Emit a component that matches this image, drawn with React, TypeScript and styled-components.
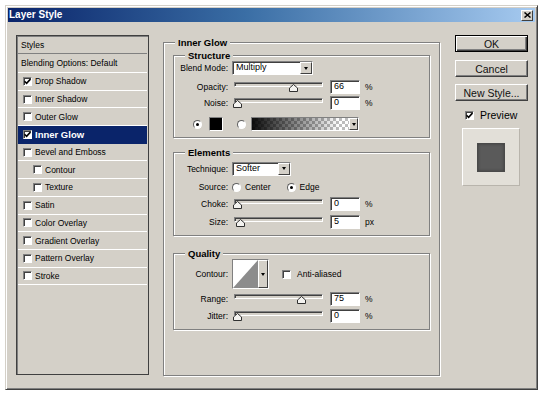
import React from "react";
import styled, { createGlobalStyle } from "styled-components";

const GlobalStyle = createGlobalStyle`
  html, body {
    margin: 0;
    padding: 0;
    background: #fff;
  }
  body {
    font-family: "Liberation Sans", Arial, sans-serif;
    font-size: 8.5px;
    color: #000;
  }
  * {
    box-sizing: border-box;
  }
`;

const face = "#d4d0c8";

const Page = styled.div`
  padding: 5px 0 0 5px;
`;

const Window = styled.div`
  width: 533px;
  height: 385px;
  background: ${face};
  border: 1px solid;
  border-color: ${face} #404040 #404040 ${face};
  box-shadow: inset 1px 1px 0 #fff, inset -1px -1px 0 #808080;
  padding: 2px;
  display: flex;
  flex-direction: column;
`;

const TitleBar = styled.div`
  height: 14px;
  background: linear-gradient(to right, #0a246a 0%, #3a6ea5 45%, #a6caf0 100%);
  display: flex;
  align-items: center;
  justify-content: space-between;
  padding: 0 2px 0 1px;
`;

const Title = styled.div`
  color: #fff;
  font-weight: bold;
  font-size: 10px;
  line-height: 14px;
`;

const CloseBox = styled.div`
  width: 12px;
  height: 11px;
  background: ${face};
  border: 1px solid;
  border-color: #fff #404040 #404040 #fff;
  display: flex;
  align-items: center;
  justify-content: center;
`;

const Body = styled.div`
  display: flex;
  padding: 13px 0 0 8px;
`;

/* ---------- styles list ---------- */

const StylesList = styled.div`
  width: 133px;
  height: 340px;
  border: 1px solid #404040;
  box-shadow: inset 1px 1px 0 #808080;
  padding: 0 1px;
`;

const ListHead = styled.div<{ $h: number; $line: string }>`
  height: ${(p) => p.$h}px;
  border-bottom: 1px solid ${(p) => p.$line};
  display: flex;
  align-items: center;
  padding-left: 3px;
`;

const ListRow = styled.div<{ $indent: boolean; $selected: boolean }>`
  height: 17.7px;
  border-bottom: 1px solid ${(p) => (p.$selected ? "#0a246a" : "#fff")};
  display: flex;
  align-items: center;
  padding-left: ${(p) => (p.$indent ? 15 : 5)}px;
  background: ${(p) => (p.$selected ? "#0a246a" : "transparent")};
  color: ${(p) => (p.$selected ? "#fff" : "#000")};
  font-weight: ${(p) => (p.$selected ? "bold" : "normal")};
  font-size: ${(p) => (p.$selected ? 9.5 : 8.5)}px;
`;

const RowText = styled.span`
  margin-left: 3px;
  white-space: nowrap;
`;

/* ---------- form primitives ---------- */

const CheckBox = styled.span`
  width: 9px;
  height: 9px;
  flex: none;
  background: #fff;
  border: 1px solid;
  border-color: #808080 #fff #fff #808080;
  box-shadow: inset 1px 1px 0 #404040;
  display: inline-flex;
  align-items: center;
  justify-content: center;
`;

const Radio = styled.span`
  width: 9px;
  height: 9px;
  flex: none;
  border-radius: 50%;
  background: #fff;
  border: 1px solid;
  border-color: #606060 #fff #fff #606060;
  display: inline-flex;
  align-items: center;
  justify-content: center;
`;

const Dot = styled.span`
  width: 3px;
  height: 3px;
  border-radius: 50%;
  background: #000;
`;

const Sunken = styled.div<{ $w: number; $h: number; $ml: number }>`
  width: ${(p) => p.$w}px;
  height: ${(p) => p.$h}px;
  margin-left: ${(p) => p.$ml}px;
  flex: none;
  background: #fff;
  border: 1px solid;
  border-color: #808080 #fff #fff #808080;
  box-shadow: inset 1px 1px 0 #404040;
  display: flex;
  align-items: stretch;
`;

const FieldText = styled.span`
  flex: 1;
  padding-left: 3px;
  font-size: 9px;
  line-height: 11px;
  white-space: nowrap;
  overflow: hidden;
`;

const DropButton = styled.span<{ $w: number }>`
  width: ${(p) => p.$w}px;
  flex: none;
  background: ${face};
  border: 1px solid;
  border-color: #fff #404040 #404040 #fff;
  display: flex;
  align-items: center;
  justify-content: center;
`;

const Arrow = styled.span`
  width: 0;
  height: 0;
  border-left: 2.5px solid transparent;
  border-right: 2.5px solid transparent;
  border-top: 3px solid #000;
`;

/* ---------- group boxes ---------- */

const Group = styled.div<{ $mt: number; $mx: number; $pb: number; $h?: number }>`
  margin: ${(p) => p.$mt}px ${(p) => p.$mx}px 0;
  padding-bottom: ${(p) => p.$pb}px;
  ${(p) => (p.$h ? `height: ${p.$h}px;` : "")}
  border: 1px solid #808080;
  box-shadow: inset 1px 1px 0 #fff, 1px 1px 0 #fff;
`;

const Legend = styled.div`
  width: fit-content;
  margin: -6px 0 0 11px;
  padding: 0 3px;
  background: ${face};
  font-weight: bold;
  font-size: 9.5px;
  line-height: 11px;
`;

const MiddleColumn = styled.div`
  width: 277px;
  margin: 7px 0 0 14px;
`;

const Row = styled.div<{ $h: number; $mt: number; $pl?: number }>`
  height: ${(p) => p.$h}px;
  margin-top: ${(p) => p.$mt}px;
  padding-left: ${(p) => p.$pl ?? 0}px;
  display: flex;
  align-items: center;
`;

const Label = styled.span`
  width: 54px;
  flex: none;
  text-align: right;
  white-space: nowrap;
`;

const SliderBox = styled.div`
  position: relative;
  width: 89px;
  height: 14px;
  margin-left: 6px;
  flex: none;
  align-self: flex-start;
`;

const Track = styled.div`
  margin-top: 2px;
  height: 5px;
  border: 1px solid;
  border-color: #808080 #fff #fff #808080;
  box-shadow: inset 1px 1px 0 #404040;
  background: ${face};
`;

const Thumb = styled.svg`
  position: absolute;
  top: 4px;
`;

const Unit = styled.span`
  margin-left: 5px;
  font-size: 8.5px;
`;

const Swatch = styled.div`
  width: 14px;
  height: 14px;
  margin-left: 7px;
  background: #000;
  border: 1px solid;
  border-color: #808080 #fff #fff #808080;
`;

const GradientFill = styled.span`
  flex: 1;
  background: linear-gradient(to right, rgba(0, 0, 0, 0.95), rgba(0, 0, 0, 0) 90%),
    repeating-conic-gradient(#bdbdbd 0 25%, #fff 0 50%) 0 0 / 6px 6px;
`;

const RadioText = styled.span<{ $ml: number }>`
  margin-left: ${(p) => p.$ml}px;
  white-space: nowrap;
`;

const RadioWrap = styled.span<{ $ml: number }>`
  margin-left: ${(p) => p.$ml}px;
  display: inline-flex;
`;

const ContourPic = styled.svg`
  display: block;
  flex: none;
`;

/* ---------- right column ---------- */

const RightColumn = styled.div`
  width: 73px;
  margin-left: 15px;
  display: flex;
  flex-direction: column;
`;

const Button = styled.div<{ $default?: boolean; $mt: number }>`
  height: 17px;
  margin-top: ${(p) => p.$mt}px;
  background: ${face};
  border: 1px solid;
  border-color: ${(p) => (p.$default ? "#000" : "#fff #404040 #404040 #fff")};
  box-shadow: ${(p) =>
    p.$default
      ? "inset 1px 1px 0 #fff, inset -1px -1px 0 #404040, inset -2px -2px 0 #808080"
      : "inset -1px -1px 0 #808080"};
  display: flex;
  align-items: center;
  justify-content: center;
  font-size: 10.5px;
  color: #111;
`;

const PreviewRow = styled.div`
  margin-top: 9px;
  height: 10px;
  padding-left: 10px;
  display: flex;
  align-items: center;
  font-size: 10.5px;
`;

const PreviewBox = styled.div`
  width: 58px;
  height: 58px;
  margin: 8px 0 0 7px;
  background: #e2dfd8;
  border: 1px solid;
  border-color: #fff #b8b4ac #b8b4ac #fff;
  display: flex;
  align-items: center;
  justify-content: center;
`;

const PreviewSquare = styled.div`
  width: 28px;
  height: 29px;
  background: #5a5a5a;
  border: 1px solid #4a4a4a;
  box-shadow: inset 0 0 3px #3c3c3c;
`;

/* ---------- small pieces ---------- */

const Check = ({ color = "#000" }: { color?: string }) => (
  <svg width="7" height="7" viewBox="0 0 7 7">
    <path d="M0.5 3.2 L2.6 5.3 L6.5 1" fill="none" stroke={color} strokeWidth="1.6" />
  </svg>
);

const Box = ({ checked }: { checked?: boolean }) => (
  <CheckBox>{checked && <Check />}</CheckBox>
);

const RadioButton = ({ on }: { on?: boolean }) => <Radio>{on && <Dot />}</Radio>;

const Dropdown = ({ text, width }: { text: string; width: number }) => (
  <Sunken $w={width} $h={14} $ml={4}>
    <FieldText>{text}</FieldText>
    <DropButton $w={12}>
      <Arrow />
    </DropButton>
  </Sunken>
);

const Slider = ({ pct }: { pct: number }) => (
  <SliderBox>
    <Track />
    <Thumb width="9" height="8" viewBox="0 0 9 8" style={{ left: pct * 85 - 1 }}>
      <path d="M4.5 0.5 L8.5 4 L8.5 7.5 L0.5 7.5 L0.5 4 Z" fill="#f4f3f0" stroke="#303030" strokeWidth="1" />
    </Thumb>
  </SliderBox>
);

const Num = ({ value }: { value: string }) => (
  <Sunken $w={30} $h={14} $ml={7}>
    <FieldText>{value}</FieldText>
  </Sunken>
);

const SliderRow = ({
  label,
  pct,
  value,
  unit,
  mt,
}: {
  label: string;
  pct: number;
  value: string;
  unit: string;
  mt: number;
}) => (
  <Row $h={14} $mt={mt}>
    <Label>{label}</Label>
    <Slider pct={pct} />
    <Num value={value} />
    <Unit>{unit}</Unit>
  </Row>
);

const styleItems = [
  { name: "Drop Shadow", checked: true },
  { name: "Inner Shadow" },
  { name: "Outer Glow" },
  { name: "Inner Glow", checked: true, selected: true },
  { name: "Bevel and Emboss" },
  { name: "Contour", indent: true },
  { name: "Texture", indent: true },
  { name: "Satin" },
  { name: "Color Overlay" },
  { name: "Gradient Overlay" },
  { name: "Pattern Overlay" },
  { name: "Stroke" },
];

export default function App() {
  return (
    <Page>
      <GlobalStyle />
      <Window>
        <TitleBar>
          <Title>Layer Style</Title>
          <CloseBox>
            <svg width="7" height="6" viewBox="0 0 7 6">
              <path d="M0.5 0.5 L6.5 5.5 M6.5 0.5 L0.5 5.5" stroke="#000" strokeWidth="1.5" />
            </svg>
          </CloseBox>
        </TitleBar>

        <Body>
          <StylesList>
            <ListHead $h={18} $line="#808080">Styles</ListHead>
            <ListHead $h={19} $line="#fff">Blending Options: Default</ListHead>
            {styleItems.map((item) => (
              <ListRow key={item.name} $indent={!!item.indent} $selected={!!item.selected}>
                <Box checked={item.checked} />
                <RowText>{item.name}</RowText>
              </ListRow>
            ))}
          </StylesList>

          <MiddleColumn>
            <Group $mt={0} $mx={0} $pb={0} $h={334}>
              <Legend>Inner Glow</Legend>

              <Group $mt={7} $mx={9} $pb={6}>
                <Legend>Structure</Legend>
                <Row $h={14} $mt={0}>
                  <Label>Blend Mode:</Label>
                  <Dropdown text="Multiply" width={81} />
                </Row>
                <SliderRow label="Opacity:" pct={0.66} value="66" unit="%" mt={5} />
                <SliderRow label="Noise:" pct={0} value="0" unit="%" mt={2} />
                <Row $h={14} $mt={7} $pl={19}>
                  <RadioButton on />
                  <Swatch />
                  <RadioWrap $ml={14}>
                    <RadioButton />
                  </RadioWrap>
                  <Sunken $w={108} $h={14} $ml={5}>
                    <GradientFill />
                    <DropButton $w={9}>
                      <Arrow />
                    </DropButton>
                  </Sunken>
                </Row>
              </Group>

              <Group $mt={14} $mx={9} $pb={6}>
                <Legend>Elements</Legend>
                <Row $h={13} $mt={4}>
                  <Label>Technique:</Label>
                  <Dropdown text="Softer" width={59} />
                </Row>
                <Row $h={12} $mt={6}>
                  <Label>Source:</Label>
                  <RadioWrap $ml={4}>
                    <RadioButton />
                  </RadioWrap>
                  <RadioText $ml={4}>Center</RadioText>
                  <RadioWrap $ml={16}>
                    <RadioButton on />
                  </RadioWrap>
                  <RadioText $ml={4}>Edge</RadioText>
                </Row>
                <SliderRow label="Choke:" pct={0} value="0" unit="%" mt={4} />
                <SliderRow label="Size:" pct={0.03} value="5" unit="px" mt={4} />
              </Group>

              <Group $mt={17} $mx={9} $pb={6}>
                <Legend>Quality</Legend>
                <Row $h={30} $mt={0}>
                  <Label>Contour:</Label>
                  <Sunken $w={37} $h={30} $ml={4}>
                    <ContourPic width="25" height="28" viewBox="0 0 25 28">
                      <rect width="25" height="28" fill="#fff" />
                      <path d="M0 28 L25 0 L25 28 Z" fill="#8c8c8c" />
                    </ContourPic>
                    <DropButton $w={10}>
                      <Arrow />
                    </DropButton>
                  </Sunken>
                  <RadioWrap $ml={13}>
                    <Box />
                  </RadioWrap>
                  <RadioText $ml={6}>Anti-aliased</RadioText>
                </Row>
                <SliderRow label="Range:" pct={0.75} value="75" unit="%" mt={3} />
                <SliderRow label="Jitter:" pct={0} value="0" unit="%" mt={3} />
              </Group>
            </Group>
          </MiddleColumn>

          <RightColumn>
            <Button $default $mt={0}>OK</Button>
            <Button $mt={8}>Cancel</Button>
            <Button $mt={7}>New Style...</Button>
            <PreviewRow>
              <Box checked />
              <RadioText $ml={6}>Preview</RadioText>
            </PreviewRow>
            <PreviewBox>
              <PreviewSquare />
            </PreviewBox>
          </RightColumn>
        </Body>
      </Window>
    </Page>
  );
}
